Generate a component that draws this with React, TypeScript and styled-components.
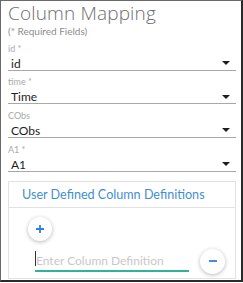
import styled, { createGlobalStyle } from "styled-components";

const GlobalStyle = createGlobalStyle`
  html, body {
    margin: 0;
    padding: 0;
    background: #fff;
  }
  body {
    font-family: Lato, "Liberation Sans", sans-serif;
  }
`;

const Frame = styled.div`
  box-sizing: border-box;
  width: 243px;
  height: 282px;
  padding: 1px 5px 0 7px;
  border-top: 1px solid #6a6a6a;
  border-left: 1px solid #6a6a6a;
  border-right: 2px solid #2a2a2a;
  border-bottom: 2px solid #2a2a2a;
  background: #fff;
`;

const Title = styled.h1`
  margin: 0;
  font-family: "Open Sans", "Liberation Sans", sans-serif;
  font-size: 19px;
  line-height: 23px;
  font-weight: 300;
  color: #6e6e6e;
  letter-spacing: 0.15px;
`;

const Note = styled.div`
  font-size: 10px;
  line-height: 12px;
  color: #8c8c8c;
`;

const Field = styled.div`
  margin-top: 6.67px;
  &:first-of-type {
    margin-top: 3px;
  }
`;

const Label = styled.div`
  font-size: 9px;
  line-height: 10px;
  color: #aaaaaa;
`;

const Select = styled.div`
  display: flex;
  align-items: center;
  justify-content: space-between;
  margin-top: 3px;
  height: 13px;
  padding: 0 6px 0 3px;
  border-bottom: 1px solid #a8a8a8;
  font-size: 12px;
  line-height: 13px;
  color: #1e1e1e;
`;

const Caret = styled.span`
  width: 0;
  height: 0;
  border-left: 4px solid transparent;
  border-right: 4px solid transparent;
  border-top: 4px solid #1e1e1e;
`;

const Card = styled.div`
  margin-top: 9px;
  border: 1px solid #e2e2e2;
`;

const CardHeader = styled.div`
  height: 25px;
  padding-left: 13px;
  line-height: 25px;
  border-bottom: 1px solid #e2e2e2;
  font-size: 12.6px;
  color: #3f8fd0;
`;

const CardBody = styled.div`
  padding: 9px 9px 4px 19px;
`;

const RoundButton = styled.button<{ $size: number }>`
  display: flex;
  flex: none;
  align-items: center;
  justify-content: center;
  width: ${(p) => p.$size}px;
  height: ${(p) => p.$size}px;
  padding: 0;
  border: none;
  border-radius: 50%;
  background: #fff;
  box-shadow: 0 1px 4px rgba(0, 0, 0, 0.28);
  cursor: pointer;
`;

const InputRow = styled.div`
  display: flex;
  align-items: flex-start;
  margin-top: 8px;
  padding-left: 7px;
  gap: 11px;
`;

const InputWrap = styled.div`
  position: relative;
  width: 154px;
  margin-top: 2px;
  border-bottom: 2px solid #2fb39a;
  &::before {
    content: "";
    position: absolute;
    left: 0;
    top: 0;
    width: 1px;
    height: 15px;
    background: #333;
  }
`;

const Input = styled.input`
  display: block;
  box-sizing: border-box;
  width: 100%;
  height: 19px;
  padding: 0 0 0 1px;
  border: none;
  outline: none;
  background: transparent;
  font-family: inherit;
  font-size: 12px;
  color: #333;
  &::placeholder {
    color: #c8c8c8;
  }
`;

const fields = [
  { label: "id *", value: "id" },
  { label: "time *", value: "Time" },
  { label: "CObs", value: "CObs" },
  { label: "A1 *", value: "A1" },
];

export default function App() {
  return (
    <>
      <GlobalStyle />
      <Frame>
        <Title>Column Mapping</Title>
        <Note>(* Required Fields)</Note>
        {fields.map((f) => (
          <Field key={f.label}>
            <Label>{f.label}</Label>
            <Select>
              <span>{f.value}</span>
              <Caret />
            </Select>
          </Field>
        ))}
        <Card>
          <CardHeader>User Defined Column Definitions</CardHeader>
          <CardBody>
            <RoundButton $size={24} aria-label="add">
              <svg width="10" height="10" viewBox="0 0 10 10">
                <path d="M5 1v8M1 5h8" stroke="#2f7fe6" strokeWidth="1.8" />
              </svg>
            </RoundButton>
            <InputRow>
              <InputWrap>
                <Input placeholder="Enter Column Definition" />
              </InputWrap>
              <RoundButton $size={25} aria-label="remove">
                <svg width="10" height="10" viewBox="0 0 10 10">
                  <path d="M1 5h8" stroke="#2f7fe6" strokeWidth="1.8" />
                </svg>
              </RoundButton>
            </InputRow>
          </CardBody>
        </Card>
      </Frame>
    </>
  );
}
